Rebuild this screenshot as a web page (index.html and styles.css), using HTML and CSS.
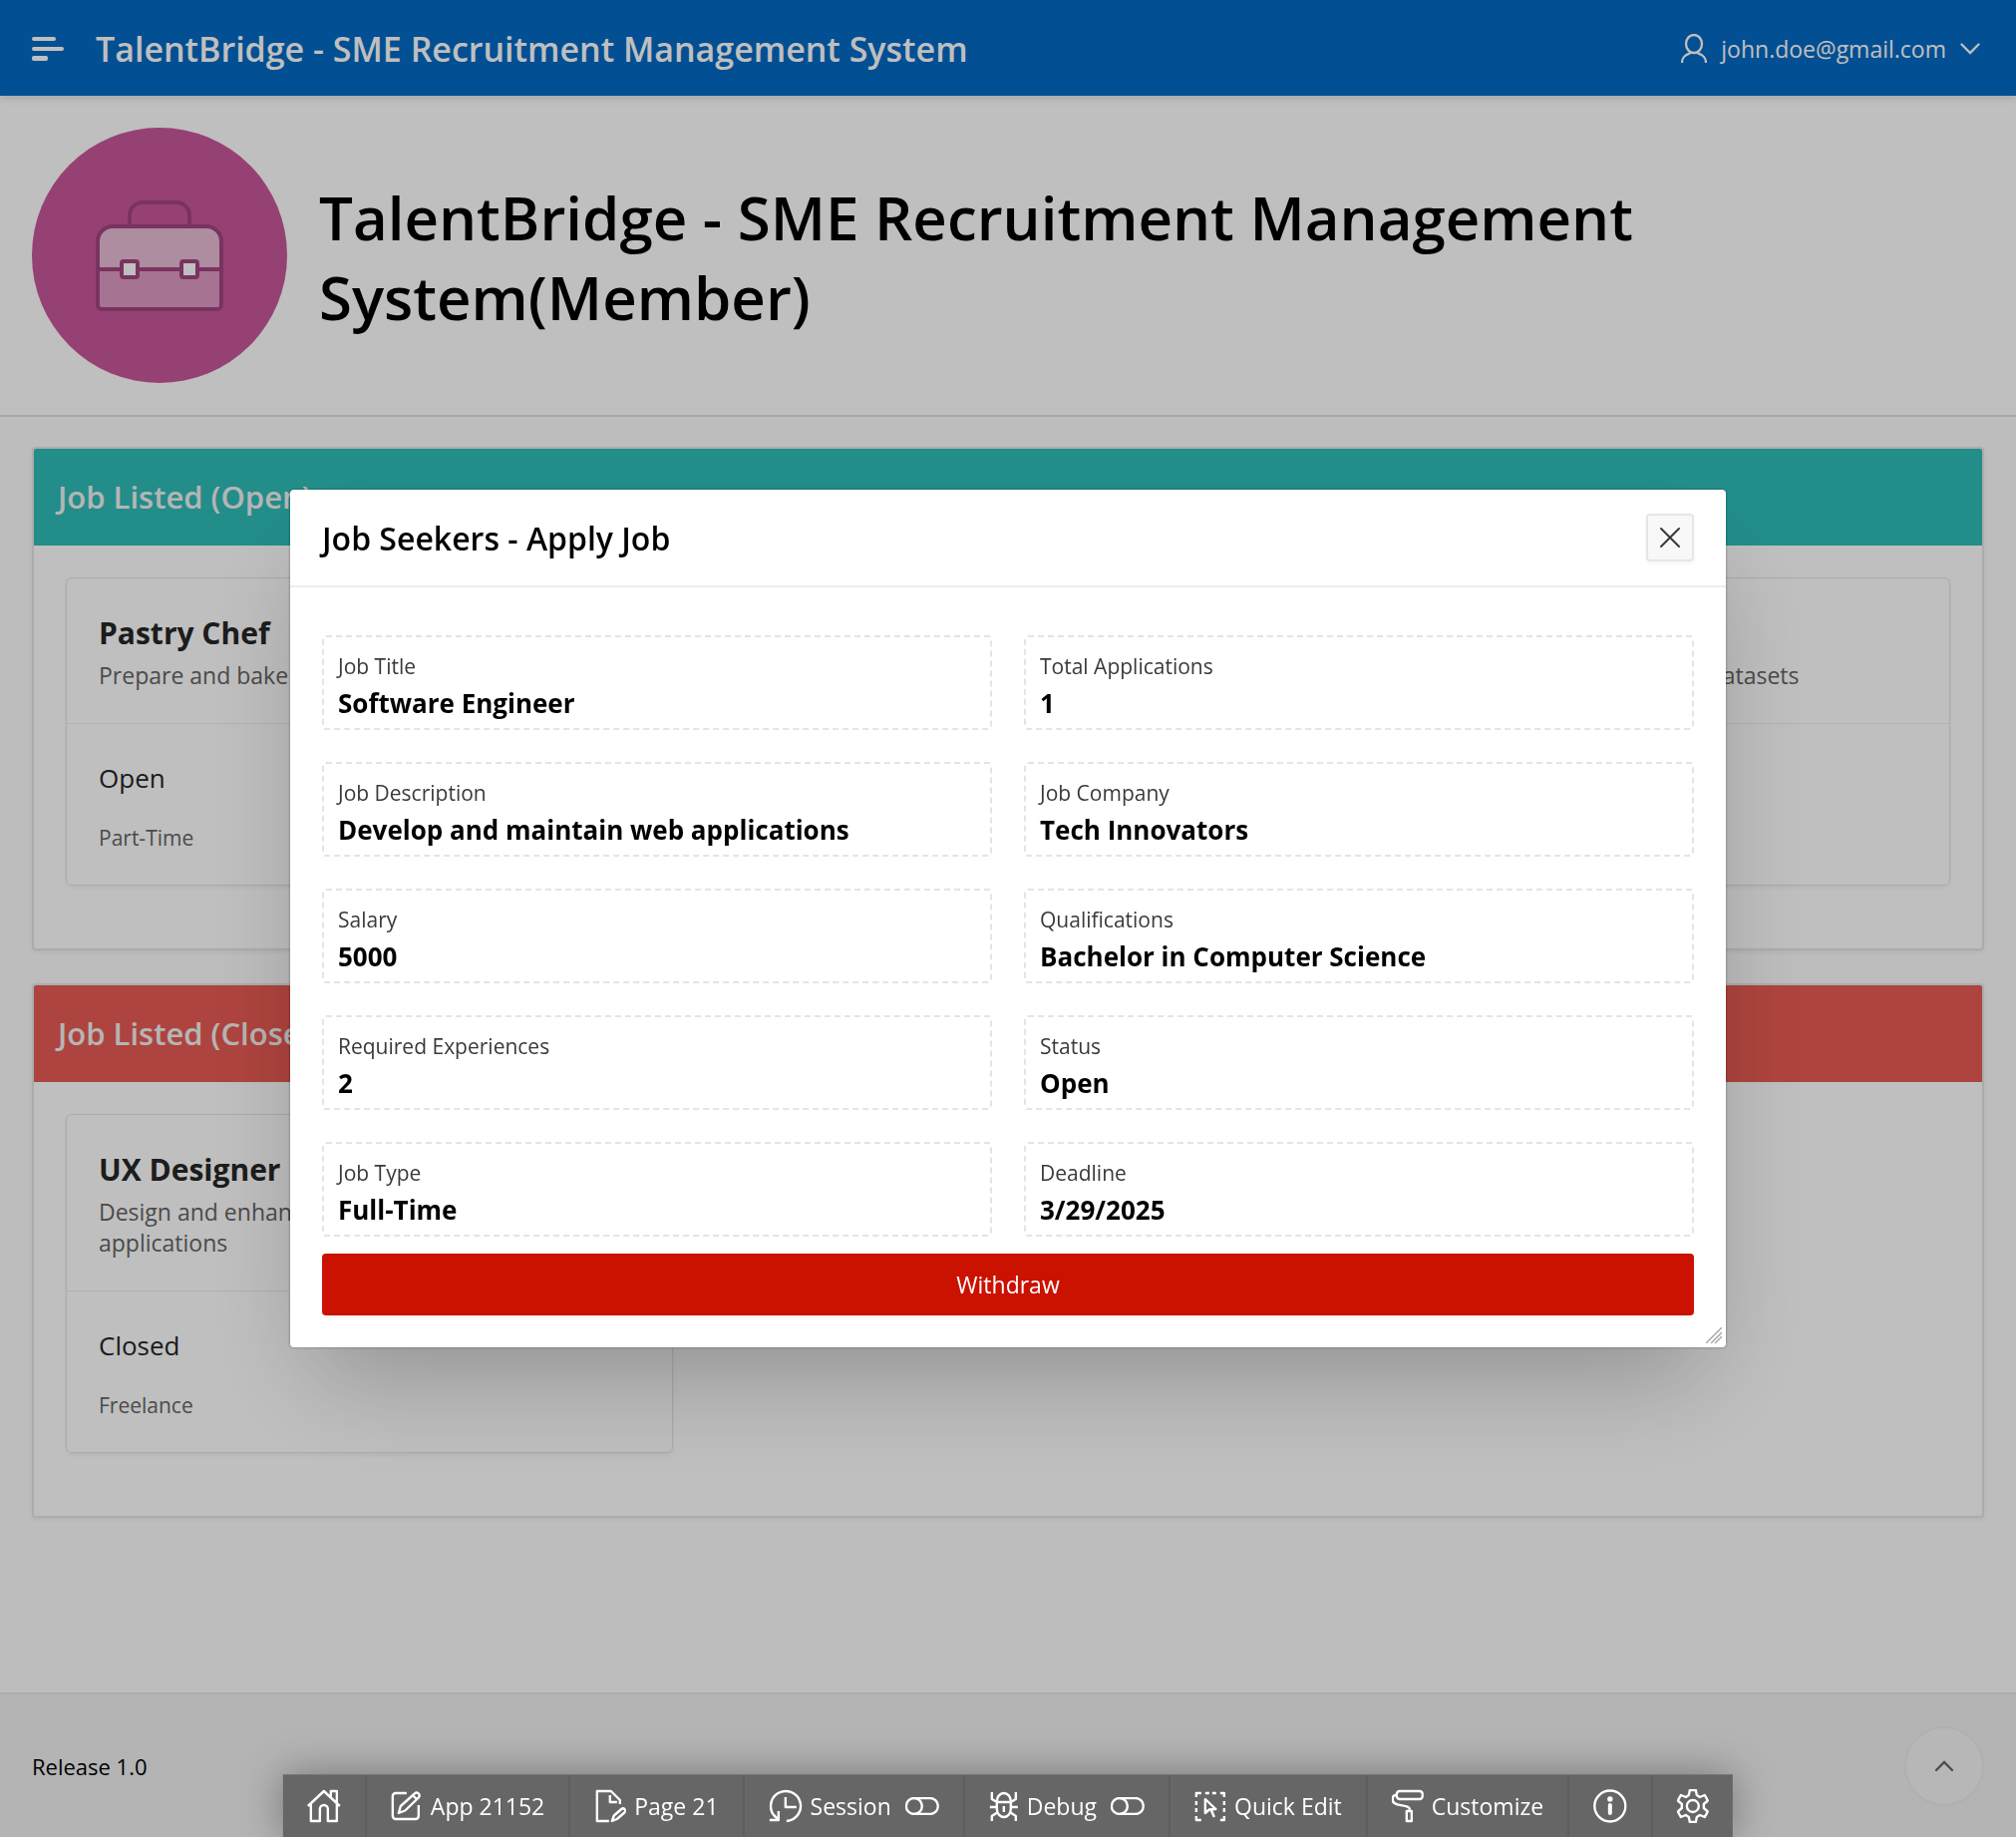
FILE: index.html
```html
<!DOCTYPE html>
<html lang="en">
<head>
<meta charset="utf-8">
<meta name="viewport" content="width=device-width, initial-scale=1">
<title>TalentBridge - SME Recruitment Management System</title>
<link rel="stylesheet" href="styles.css">
</head>
<body>
<div class="page">
  <header class="topbar">
    <button class="icon-button" type="button" aria-label="Main navigation">
      <svg width="32" height="32" viewBox="0 0 32 32" fill="currentColor" aria-hidden="true">
        <rect x="0" y="4" width="24" height="4" rx="2"/><rect x="0" y="14" width="32" height="4" rx="2"/><rect x="0" y="23" width="16" height="5" rx="2"/>
      </svg>
    </button>
    <a class="brand" href="#">TalentBridge - SME Recruitment Management System</a>
    <button class="user-menu" type="button">
      <svg width="26" height="30" viewBox="0 0 26 30" fill="none" stroke="currentColor" stroke-width="2.300" aria-hidden="true">
        <ellipse cx="13" cy="10" rx="8" ry="9"/><path d="M10.500 18.200C9 20.500 1 20 1 29M15.500 18.200C17 20.500 25 20 25 29"/>
      </svg>
      <span>john.doe@gmail.com</span>
      <svg class="user-caret" width="20" height="12" viewBox="0 0 20 12" fill="none" stroke="currentColor" stroke-width="2.300" stroke-linecap="round" aria-hidden="true"><path d="M1.500 1.500 10 10l8.500-8.500"/></svg>
    </button>
  </header>

  <section class="hero">
    <svg class="hero-icon" width="256" height="256" viewBox="0 0 256 256" aria-hidden="true">
      <circle cx="128" cy="128" r="128" fill="#c8579b"/>
      <path d="M98 98V88a13 13 0 0 1 13-13h34a13 13 0 0 1 13 13v10" fill="none" stroke="#a34580" stroke-width="4"/>
      <path d="M66 142V114a15 15 0 0 1 15-15h94a15 15 0 0 1 15 15v28z" fill="#e9bcd7"/>
      <path d="M66 142h124v36a4 4 0 0 1-4 4H70a4 4 0 0 1-4-4z" fill="#de9ac3"/>
      <path d="M66 142h124M81 99h94a15 15 0 0 1 15 15v64a4 4 0 0 1-4 4H70a4 4 0 0 1-4-4v-64a15 15 0 0 1 15-15z" fill="none" stroke="#a34580" stroke-width="4"/>
      <rect x="90" y="134" width="16" height="16" rx="2" fill="#fff" stroke="#a34580" stroke-width="4"/>
      <rect x="150" y="134" width="16" height="16" rx="2" fill="#fff" stroke="#a34580" stroke-width="4"/>
    </svg>
    <h1>TalentBridge - SME Recruitment Management System(Member)</h1>
  </section>

  <main class="content">
    <section class="region region-open">
      <h2>Job Listed (Open)</h2>
      <div class="cards">
        <article class="card">
          <div class="card-head"><h3>Pastry Chef</h3><p>Prepare and bake pastries and desserts</p></div>
          <div class="card-body"><p class="state">Open</p><p class="kind">Part-Time</p></div>
        </article>
        <article class="card">
          <div class="card-head"><h3>Software Engineer</h3><p>Develop and maintain web applications</p></div>
          <div class="card-body"><p class="state">Open</p><p class="kind">Full-Time</p></div>
        </article>
        <article class="card">
          <div class="card-head"><h3>Data Analyst</h3><p>Analyze and interpret complex datasets</p></div>
          <div class="card-body"><p class="state">Open</p><p class="kind">Full-Time</p></div>
        </article>
      </div>
    </section>

    <section class="region region-closed">
      <h2>Job Listed (Closed)</h2>
      <div class="cards">
        <article class="card">
          <div class="card-head"><h3>UX Designer</h3><p>Design and enhance user interfaces for web applications</p></div>
          <div class="card-body"><p class="state">Closed</p><p class="kind">Freelance</p></div>
        </article>
      </div>
    </section>
  </main>

  <footer class="footer">
    <span>Release 1.0</span>
    <button class="to-top" type="button" aria-label="Start of page">
      <svg width="20" height="12" viewBox="0 0 20 12" fill="none" stroke="currentColor" stroke-width="2.300" stroke-linecap="round" aria-hidden="true"><path d="M2 10l8-8 8 8"/></svg>
    </button>
  </footer>
</div>

<div class="overlay">
  <div class="dialog" role="dialog" aria-modal="true" aria-labelledby="dialog-title">
    <div class="dialog-bar">
      <h2 id="dialog-title">Job Seekers - Apply Job</h2>
      <button class="close" type="button" aria-label="Close">
        <svg width="22" height="22" viewBox="0 0 22 22" fill="none" stroke="currentColor" stroke-width="2" stroke-linecap="round" aria-hidden="true"><path d="M2 2l18 18M20 2 2 20"/></svg>
      </button>
    </div>
    <div class="dialog-body">
      <dl class="fields">
        <div class="field"><dt>Job Title</dt><dd>Software Engineer</dd></div>
        <div class="field"><dt>Total Applications</dt><dd>1</dd></div>
        <div class="field"><dt>Job Description</dt><dd>Develop and maintain web applications</dd></div>
        <div class="field"><dt>Job Company</dt><dd>Tech Innovators</dd></div>
        <div class="field"><dt>Salary</dt><dd>5000</dd></div>
        <div class="field"><dt>Qualifications</dt><dd>Bachelor in Computer Science</dd></div>
        <div class="field"><dt>Required Experiences</dt><dd>2</dd></div>
        <div class="field"><dt>Status</dt><dd>Open</dd></div>
        <div class="field"><dt>Job Type</dt><dd>Full-Time</dd></div>
        <div class="field"><dt>Deadline</dt><dd>3/29/2025</dd></div>
      </dl>
      <button class="withdraw" type="button">Withdraw</button>
    </div>
    <svg class="grip" width="16" height="16" viewBox="0 0 16 16" fill="none" stroke="#a0a0a0" stroke-width="1.300" aria-hidden="true"><path d="M0 16 16 0M5 16 16 5M9 16l7-7"/></svg>
  </div>
</div>

<nav class="devbar" aria-label="Developer toolbar">
  <button type="button" aria-label="Home">
    <svg width="34" height="34" viewBox="0 0 34 34" aria-hidden="true"><path d="M1 17 17 2l16 15M4 14.500V32h9V20a4 4 0 0 1 8 0v12h9V14.500M24 8V2h6v11.500"/></svg>
  </button>
  <button type="button">
    <svg width="32" height="32" viewBox="0 0 32 32" aria-hidden="true"><path d="M16 3H5a3 3 0 0 0-3 3v20a3 3 0 0 0 3 3h20a3 3 0 0 0 3-3V15M8 23l2-7L24 3.500a2.500 2.500 0 0 1 4 4L14.500 20.500zM22 5l4 4"/></svg>
    App 21152
  </button>
  <button type="button">
    <svg width="32" height="34" viewBox="0 0 32 34" aria-hidden="true"><path d="M15 32H3V2h14l9 9v4M16 6v7h7M18 32l2-5.500 7.500-6.500a2.300 2.300 0 0 1 3 3.500L23 30z"/></svg>
    Page 21
  </button>
  <button type="button">
    <svg width="34" height="34" viewBox="0 0 34 34" aria-hidden="true"><path d="M7 28A15 15 0 1 1 18 32M17 8v10h11M1 31h9v-9M5.500 26l4.500 5"/></svg>
    Session
    <svg class="toggle" width="34" height="18" viewBox="0 0 34 18" aria-hidden="true"><rect x="1" y="1" width="32" height="16" rx="8"/><path d="M9 1a8 8 0 0 1 0 16"/></svg>
  </button>
  <button type="button">
    <svg width="30" height="32" viewBox="0 0 30 32" aria-hidden="true"><path d="M8 11a7 8 0 0 1 14 0v8a7 8 0 0 1-14 0zM3 2v7l5 3h14l5-3V2M1 17h7M22 17h7M3 31v-5l6-4M27 31v-5l-6-4M15 16v6"/></svg>
    Debug
    <svg class="toggle" width="34" height="18" viewBox="0 0 34 18" aria-hidden="true"><rect x="1" y="1" width="32" height="16" rx="8"/><path d="M9 1a8 8 0 0 1 0 16"/></svg>
  </button>
  <button type="button">
    <svg width="32" height="32" viewBox="0 0 32 32" aria-hidden="true"><path d="M2 7V3h5M11 3h4M18 3h4M26 3h4v4M30 11v4M30 18v4M30 26v4h-4M7 30H2v-4M2 22v-4M2 15v-4M17 20l3 7"/><path d="M11 9v14l4-3.500 6.500-.500z"/></svg>
    Quick Edit
  </button>
  <button type="button">
    <svg width="32" height="34" viewBox="0 0 32 34" aria-hidden="true"><rect x="5" y="2" width="26" height="8" rx="3"/><path d="M5 6H4a3 3 0 0 0-3 3v2c0 7 17 4 17 9v2M15 22h5v10h-5z"/></svg>
    Customize
  </button>
  <button type="button" aria-label="Page info">
    <svg width="34" height="34" viewBox="0 0 34 34" aria-hidden="true"><circle cx="17" cy="17" r="15.500"/><path d="M17 16v8" stroke-width="4" stroke-linecap="round"/><circle cx="17" cy="10" r="1.500" fill="currentColor"/></svg>
  </button>
  <button type="button" aria-label="Settings">
    <svg width="32" height="34" viewBox="0 0 32 34" aria-hidden="true"><path d="M13 1h6l1 5 3 2 5-2 3 5.500-4 3.500v4l4 3.500-3 5.500-5-2-3 2-1 5h-6l-1-5-3-2-5 2-3-5.500L5 19v-4l-4-3.500L4 6l5 2 3-2z"/><circle cx="16" cy="17" r="6"/></svg>
  </button>
</nav>
</body>
</html>
```
FILE: styles.css
```css
* { box-sizing: border-box; }

body {
  margin: 0;
  font-family: "Open Sans", "Noto Sans", sans-serif;
  font-size: 22px;
  line-height: 32px;
  color: #000;
  background: #fcfcfc;
}

h1, h2, h3, p, dl, dd { margin: 0; }

button {
  font-family: inherit;
  border: 0;
  padding: 0;
  background: none;
  color: inherit;
  cursor: pointer;
}

svg { flex: none; }

.page {
  display: flex;
  flex-direction: column;
  min-height: 100vh;
}

/* Top bar */
.topbar {
  position: relative;
  display: flex;
  align-items: center;
  height: 96px;
  padding: 2px 36px 0 32px;
  background: #056ac5;
  color: #fff;
  box-shadow: 0 2px 8px rgba(0, 0, 0, .15);
}

.icon-button { display: flex; margin-right: 32px; }

.brand {
  font-size: 34px;
  line-height: 48px;
  font-weight: 600;
  color: inherit;
  text-decoration: none;
}

.user-menu {
  display: flex;
  align-items: center;
  gap: 14px;
  margin-left: auto;
  font-size: 23px;
  line-height: 32px;
}

/* Hero */
.hero {
  display: flex;
  align-items: center;
  gap: 32px;
  padding: 32px;
  border-bottom: 2px solid #e0e0e0;
  background: #fff;
}

.hero h1 {
  padding-top: 4px;
  font-size: 60px;
  line-height: 80px;
  font-weight: 600;
}

/* Job regions */
.content {
  flex: 1;
  display: flex;
  flex-direction: column;
  gap: 33px;
  padding: 30px 32px;
}

.region {
  border: 2px solid #e6e6e6;
  border-radius: 4px;
  background: #fff;
  overflow: hidden;
  box-shadow: 0 2px 4px rgba(0, 0, 0, .06);
}

.region h2 {
  padding: 24px 24px 25px;
  font-size: 31px;
  line-height: 48px;
  font-weight: 600;
  color: #f2f2f2;
}

.region-open h2 { background: #2fbdb8; }
.region-closed h2 { background: #e95b54; }

.cards {
  display: grid;
  grid-template-columns: repeat(3, 1fr);
  gap: 32px;
  padding: 32px 32px 63px;
}

.card {
  border: 1px solid #e4e4e4;
  border-radius: 6px;
  box-shadow: 0 2px 4px rgba(0, 0, 0, .06);
}

.card-head {
  padding: 32px;
  border-bottom: 1px solid #ececec;
  color: #646464;
  font-size: 23px;
  line-height: 31px;
}

.card-head h3 {
  margin-bottom: 4px;
  font-size: 30px;
  line-height: 46px;
  font-weight: 700;
  color: #262626;
}

.card-body { padding: 32px 32px 31px; }

.state {
  margin-bottom: 22px;
  font-size: 26px;
  line-height: 44px;
  color: #262626;
}

.kind {
  font-size: 21px;
  color: #646464;
}

/* Footer */
.footer {
  display: flex;
  align-items: center;
  justify-content: space-between;
  height: 145px;
  padding: 0 32px;
  border-top: 2px solid #e8e8e8;
  background: #f0f0f0;
}

.to-top {
  display: flex;
  align-items: center;
  justify-content: center;
  width: 80px;
  height: 80px;
  border: 2px solid #ebebeb;
  border-radius: 50%;
  background: #f5f5f5;
  color: #646464;
}

/* Dialog */
.overlay {
  position: fixed;
  inset: 0;
  display: flex;
  align-items: center;
  justify-content: center;
  background: rgba(0, 0, 0, .25);
}

.dialog {
  position: relative;
  width: 1440px;
  max-width: 94%;
  border-radius: 4px;
  background: #fff;
  box-shadow: 0 0 2px 1px rgba(0, 0, 0, .2), 0 50px 100px -24px rgba(0, 0, 0, .25);
}

.dialog-bar {
  display: flex;
  align-items: center;
  justify-content: space-between;
  height: 98px;
  padding: 0 32px;
  border-bottom: 2px solid #ededed;
}

.dialog-bar h2 {
  padding-top: 2px;
  font-size: 32px;
  line-height: 48px;
  font-weight: 600;
}

.close {
  display: flex;
  align-items: center;
  justify-content: center;
  width: 48px;
  height: 48px;
  border: 2px solid #e6e6e6;
  border-radius: 4px;
  background: #f8f8f8;
  color: #393939;
  box-shadow: 0 2px 4px rgba(0, 0, 0, .04);
}

.dialog-body { padding: 48px 32px 32px; }

.fields {
  display: grid;
  grid-template-columns: 1fr 1fr;
  gap: 32px;
  margin-bottom: 17px;
}

.field {
  padding: 11px 14px 6px;
  border: 2px dashed #e4e4e4;
  border-radius: 4px;
}

.field dt {
  font-size: 21px;
  line-height: 36px;
  color: #393939;
}

.field dd {
  font-size: 26px;
  line-height: 38px;
  font-weight: 700;
}

.withdraw {
  display: block;
  width: 100%;
  height: 62px;
  border-radius: 4px;
  background: #cb1100;
  color: #fff;
  font-size: 23px;
  line-height: 32px;
  box-shadow: 0 2px 4px rgba(0, 0, 0, .06);
}

.grip {
  position: absolute;
  right: 4px;
  bottom: 4px;
}

/* Developer toolbar */
.devbar {
  position: fixed;
  bottom: 0;
  left: 50%;
  transform: translateX(-50%);
  display: flex;
  border-top: 1px solid #747474;
  background: #666;
  box-shadow: 0 0 40px rgba(0, 0, 0, .35);
}

.devbar button {
  display: flex;
  align-items: center;
  gap: 8px;
  height: 62px;
  padding: 0 24px;
  border-right: 2px solid #5e5e5e;
  color: #fff;
  font-size: 23px;
  line-height: 32px;
  white-space: nowrap;
}

.devbar button:last-child { border-right: 0; }

.devbar svg {
  fill: none;
  stroke: currentColor;
  stroke-width: 2.4;
  stroke-linejoin: round;
}

.toggle { margin-left: 6px; }
```
